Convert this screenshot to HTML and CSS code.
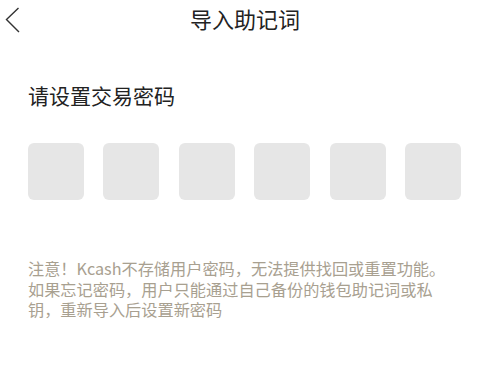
FILE: index.html
```html
<!DOCTYPE html>
<html lang="zh">
<head>
<meta charset="utf-8">
<link rel="stylesheet" href="styles.css">
</head>
<body>
<div class="page">
  <header class="nav">
    <span class="back">
      <svg width="16" height="26" viewBox="0 0 16 26"><path d="M13.5 1 L1.5 12.5 L14 25" fill="none" stroke="#333" stroke-width="1.4"/></svg>
    </span>
    <h1 class="title">导入助记词</h1>
  </header>
  <h2 class="label">请设置交易密码</h2>
  <div class="pins">
    <div class="pin"></div>
    <div class="pin"></div>
    <div class="pin"></div>
    <div class="pin"></div>
    <div class="pin"></div>
    <div class="pin"></div>
  </div>
  <p class="note">注意！Kcash不存储用户密码，无法提供找回或重置功能。<br>如果忘记密码，用户只能通过自己备份的钱包助记词或私<br>钥，重新导入后设置新密码</p>
</div>
</body>
</html>
```

FILE: styles.css
```css
html, body {
  margin: 0;
  padding: 0;
  background: #fff;
}
body {
  font-family: "Noto Sans CJK SC", "Noto Sans", sans-serif;
  width: 490px;
  height: 366px;
  overflow: hidden;
}
.page {
  display: flex;
  flex-direction: column;
}
.nav {
  position: relative;
  height: 37px;
  display: flex;
  align-items: center;
  justify-content: center;
}
.back {
  position: absolute;
  left: 5px;
  top: 7px;
  display: flex;
}
.title {
  margin: 0;
  font-size: 22px;
  font-weight: 400;
  color: #222;
  line-height: 37px;
}
.label {
  margin: 44px 0 0 28px;
  font-size: 21px;
  font-weight: 400;
  color: #222;
  line-height: 28px;
}
.pins {
  display: flex;
  gap: 19.4px;
  margin: 34px 0 0 28px;
}
.pin {
  width: 56px;
  height: 57px;
  border-radius: 6px;
  background: #e6e6e6;
}
.note {
  margin: 58px 0 0 28px;
  font-size: 16.2px;
  line-height: 20.5px;
  color: #a8a090;
}
```
